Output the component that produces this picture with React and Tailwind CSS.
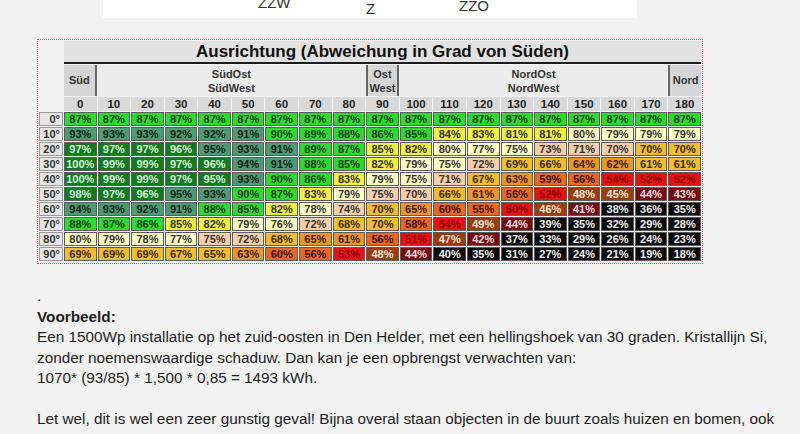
const cols = [0, 10, 20, 30, 40, 50, 60, 70, 80, 90, 100, 110, 120, 130, 140, 150, 160, 170, 180];

const tone = {
  G: "bg-[#2bdc2b] text-[#0b3d0b]",
  D: "bg-[#0f7b1e] text-[#d9f5d9]",
  T: "bg-[#4e9a72] text-[#0c2418]",
  Y: "bg-[#f1f03c] text-[#333]",
  P: "bg-[#ffffc4] text-[#333]",
  S: "bg-[#f7ceaa] text-[#333]",
  A: "bg-[#f3bd2e] text-[#3a2a00]",
  O: "bg-[#ee9528] text-[#3a2000]",
  E: "bg-[#e8691c] text-[#3a1000]",
  R: "bg-[#e61212] text-[#8a0000]",
  B: "bg-[#9c3c0c] text-[#f5e6dc]",
  M: "bg-[#780a14] text-[#f5dede]",
  K: "bg-[#0a0a0a] text-[#f0f0f0]",
};

const rows = [
  ["0°", Array(19).fill("87G").join(" ")],
  ["10°", "93T 93T 93T 92T 92T 91T 90G 89G 88G 86G 85G 84Y 83Y 81Y 81Y 80P 79P 79P 79P"],
  ["20°", "97D 97D 97D 96D 95T 93T 91T 89G 87G 85Y 82Y 80P 77P 75P 73S 71S 70S 70A 70A"],
  ["30°", "100D 99D 99D 97D 96D 94T 91T 88G 85G 82Y 79P 75P 72S 69A 66A 64O 62O 61A 61A"],
  ["40°", "100D 99D 99D 97D 95D 93T 90G 86G 83Y 79P 75P 71S 67A 63O 59E 56E 54R 52R 52R"],
  ["50°", "98D 97D 96D 95T 93T 90G 87G 83Y 79P 75S 70S 66A 61O 56E 52R 48B 45B 44M 43M"],
  ["60°", "94T 93T 92T 91T 88G 85G 82Y 78P 74S 70A 65O 60E 55E 50R 46B 41M 38K 36K 35K"],
  ["70°", "88G 87G 86G 85Y 82Y 79P 76P 72S 68A 70A 58E 54R 49B 44M 39K 35K 32K 29K 28K"],
  ["80°", "80P 79P 78P 77P 75S 72S 68A 65O 61O 56E 51R 47B 42M 37K 33K 29K 26K 24K 23K"],
  ["90°", "69A 69A 69A 67A 65A 63O 60E 56E 53R 48B 44M 40K 35K 31K 27K 24K 21K 19K 18K"],
];

const App = () => {
  return (
    <div className="w-[800px] h-[434px] overflow-hidden bg-[#f2f2f2] font-['Liberation_Sans',Arial,sans-serif]">
      {/* compass picture, bottom edge */}
      <div className="relative ml-[103px] w-[534px] h-[18px] bg-white overflow-hidden text-[15px] leading-[18px] text-[#333]">
        <span className="absolute left-[155px] top-[-6px]">ZZW</span>
        <span className="absolute left-[263px] top-[0px]">Z</span>
        <span className="absolute left-[356px] top-[-3px]">ZZO</span>
      </div>

      {/* orientation table */}
      <div className="mt-[21px] ml-[37px] w-[666px] border border-dotted border-[#e05a5a] pt-px pl-px pb-[2px]">
        <div className="grid grid-cols-[24px_repeat(19,minmax(0,1fr))] gap-x-px gap-y-px w-[662px] font-bold">
          <div />
          <div className="col-span-19 h-[23px] bg-[#e2e2e2] border-b-2 border-[#1c1c1c] text-center text-[17px] leading-[21px] text-[#111]">
            Ausrichtung (Abweichung in Grad von Süden)
          </div>

          <div />
          <div className="h-[31px] flex items-center justify-center bg-[#d6d6d6] border-r-2 border-[#666] text-[11px] text-[#333]">Süd</div>
          <div className="col-span-8 flex flex-col items-center justify-center bg-[#ececec] text-[11px] leading-[14px] text-[#333]">
            <span>SüdOst</span>
            <span>SüdWest</span>
          </div>
          <div className="flex flex-col items-center justify-center bg-[#d6d6d6] border-x-2 border-[#666] text-[11px] leading-[14px] text-[#333]">
            <span>Ost</span>
            <span>West</span>
          </div>
          <div className="col-span-8 flex flex-col items-center justify-center bg-[#ececec] text-[11px] leading-[14px] text-[#333]">
            <span>NordOst</span>
            <span>NordWest</span>
          </div>
          <div className="flex items-center justify-center bg-[#d6d6d6] border-l-2 border-[#666] text-[11px] text-[#333]">Nord</div>

          <div />
          {cols.map((c) => (
            <div key={c} className="h-[14px] bg-[#d9d9d9] text-center text-[11.5px] leading-[14px] text-[#222]">
              {c}
            </div>
          ))}

          {rows.map(([label, data]) => (
            <>
              <div key={label} className="h-[14px] bg-[#e5e5e5] border border-[#999] text-right pr-[2px] text-[11px] leading-[12px] text-[#333]">
                {label}
              </div>
              {data.split(" ").map((v, i) => (
                <div
                  key={label + i}
                  className={`h-[14px] border border-[#5c5c5c] text-center text-[11px] leading-[12px] ${tone[v.slice(-1)]}`}
                >
                  {v.slice(0, -1)}%
                </div>
              ))}
            </>
          ))}
        </div>
      </div>

      {/* example text */}
      <div className="mt-[22px] ml-[37px] text-[15.3px] leading-[20.5px] text-[#1e1e1e]">
        <p>.</p>
        <p className="font-bold">Voorbeeld:</p>
        <p className="whitespace-nowrap">Een 1500Wp installatie op het zuid-oosten in Den Helder, met een hellingshoek van 30 graden. Kristallijn Si,</p>
        <p>zonder noemenswaardige schaduw. Dan kan je een opbrengst verwachten van:</p>
        <p>1070* (93/85) * 1,500 * 0,85 = 1493 kWh.</p>
        <p>&nbsp;</p>
        <p className="whitespace-nowrap">Let wel, dit is wel een zeer gunstig geval! Bijna overal staan objecten in de buurt zoals huizen en bomen, ook</p>
      </div>
    </div>
  );
};

export default App;
